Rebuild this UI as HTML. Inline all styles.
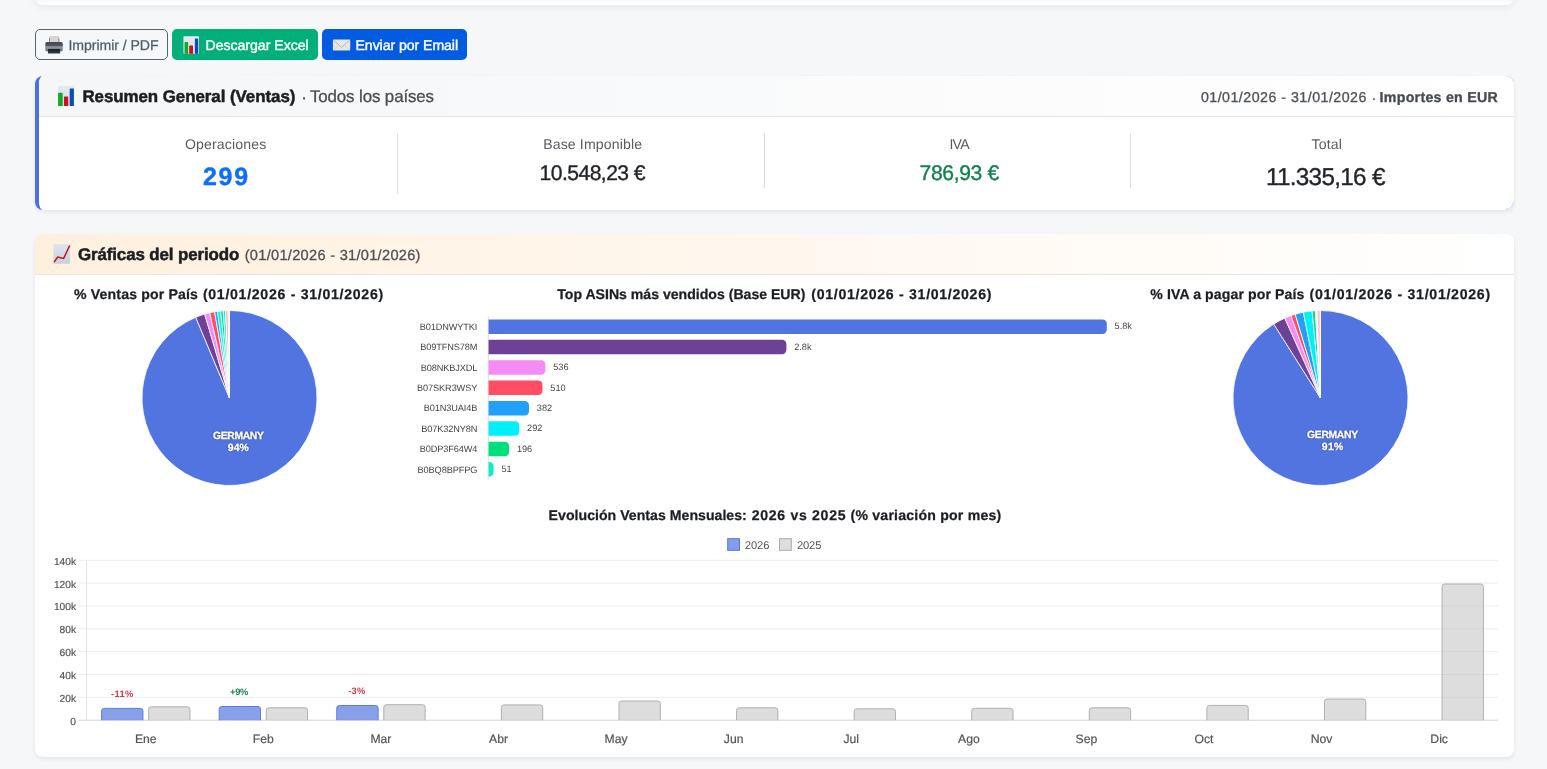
<!DOCTYPE html>
<html lang="es"><head><meta charset="utf-8"><title>Resumen General (Ventas)</title>
<style>
html,body{margin:0;padding:0;}
body{text-rendering:geometricPrecision;width:1547px;height:769px;overflow:hidden;background:#f5f7f9;font-family:"Liberation Sans",Arial,sans-serif;}
#page{will-change:transform;position:relative;width:1547px;height:769px;overflow:hidden;background:#f5f7f9;}
.t{position:absolute;white-space:pre;display:block;}
.abs{position:absolute;}
.card{position:absolute;background:#fff;border-radius:8px;box-shadow:0 2px 4px rgba(0,0,0,.08);}
.btn{position:absolute;border-radius:5px;box-sizing:border-box;}
.pl{text-shadow:0 0 2px rgba(0,0,0,.45),0 0 1px rgba(0,0,0,.4);}
svg{position:absolute;left:0;top:0;}
.grp{display:block;margin:0;padding:0;}

</style></head>
<body>
<div id="page">
<div class="card" style="left:35px;top:-40px;width:1479px;height:45px;background:linear-gradient(180deg,#f7f7f7 0,#f7f7f7 40px,#ffffff 44px);box-shadow:0 2px 8px rgba(0,0,0,.075);"></div>
<div class="btn" style="left:35px;top:29px;width:133px;height:31px;border:1px solid #59636c;background:transparent;"></div>
<div class="btn" style="left:172px;top:29px;width:146px;height:31px;background:#02af7a;"></div>
<div class="btn" style="left:322px;top:29px;width:145px;height:31px;background:#035be2;"></div>
<div class="card" style="left:35px;top:76px;width:1475px;height:134px;border-left:4px solid #4f6fdc;overflow:hidden;"><div class="abs" style="left:0;top:0;width:1475px;height:40px;background:linear-gradient(90deg,#f5f6f8 0%,#ffffff 100%);border-bottom:1px solid #e3e5e8;"></div><div class="abs" style="left:358px;top:57px;width:1px;height:61px;background:#dcdfe3;"></div><div class="abs" style="left:725px;top:57px;width:1px;height:55px;background:#dcdfe3;"></div><div class="abs" style="left:1091px;top:57px;width:1px;height:55px;background:#dcdfe3;"></div></div>
<div class="card" style="left:35px;top:234px;width:1479px;height:522.5px;overflow:hidden;"><div class="abs" style="left:0;top:0;width:1479px;height:40px;background:linear-gradient(90deg,#fff0de 0%,#ffffff 100%);border-bottom:1px solid #e9e6e1;"></div></div>
<svg width="1547" height="769" viewBox="0 0 1547 769"><defs><linearGradient id="pb" x1="0" y1="0" x2="0" y2="1"><stop offset="0" stop-color="#3d4955"/><stop offset="0.38" stop-color="#4b5762"/><stop offset="0.52" stop-color="#939ca2"/><stop offset="0.72" stop-color="#7d878d"/><stop offset="1" stop-color="#69737a"/></linearGradient><linearGradient id="pt" x1="0" y1="0" x2="0" y2="1"><stop offset="0" stop-color="#1b1e21"/><stop offset="1" stop-color="#36414a"/></linearGradient></defs>
<g><rect x="49.2" y="36.1" width="9.9" height="6.6" rx="0.8" fill="#d8d4ce"/><rect x="49.0" y="38.2" width="0.9" height="4.2" fill="#7a7c7e"/><rect x="58.4" y="38.2" width="0.9" height="4.2" fill="#7a7c7e"/><rect x="45.3" y="42.1" width="17.5" height="9.2" rx="1.6" fill="url(#pb)"/><rect x="47.9" y="49.1" width="12.3" height="4.5" rx="0.9" fill="url(#pt)"/></g>
<defs><linearGradient id="bg1" x1="0" y1="0" x2="0" y2="1"><stop offset="0" stop-color="#e4eaf0"/><stop offset="1" stop-color="#d3dbe3"/></linearGradient></defs><rect x="183.4" y="36.2" width="15.6" height="17.6" rx="0.8" fill="url(#bg1)"/><rect x="184.60" y="42.10" width="3.50" height="11.70" rx="0.6" fill="#0faa2a"/><rect x="189.20" y="45.40" width="3.80" height="8.40" rx="0.6" fill="#cf1019"/><rect x="194.90" y="38.40" width="3.30" height="15.40" rx="0.6" fill="#0a4db4"/>
<defs><linearGradient id="bg2" x1="0" y1="0" x2="0" y2="1"><stop offset="0" stop-color="#e4eaf0"/><stop offset="1" stop-color="#d3dbe3"/></linearGradient></defs><rect x="57.9" y="86.1" width="16.1" height="20.0" rx="0.8" fill="url(#bg2)"/><rect x="58.10" y="92.80" width="4.60" height="13.30" rx="0.6" fill="#0faa2a"/><rect x="64.00" y="96.50" width="4.20" height="9.60" rx="0.6" fill="#cf1019"/><rect x="69.70" y="88.40" width="4.20" height="17.70" rx="0.6" fill="#0a4db4"/>
<g><rect x="332.9" y="39.6" width="17.3" height="10.9" rx="0.9" fill="#e7e6e4"/><path d="M333.6 40.3 L341.5 47.4 L349.5 40.3" fill="none" stroke="#b4b4b4" stroke-width="0.9" stroke-linejoin="round"/><path d="M333.5 50 L339 45.2 M349.6 50 L344 45.2" fill="none" stroke="#d2d1cf" stroke-width="0.7"/></g>
<defs><linearGradient id="cu" x1="0" y1="0" x2="0" y2="1"><stop offset="0" stop-color="#dde6ee"/><stop offset="1" stop-color="#c6d0d9"/></linearGradient></defs>
<g><rect x="53.4" y="244.1" width="16.7" height="19.6" rx="0.8" fill="url(#cu)"/><path d="M54.4 261.7 L57.7 257.0 L63.6 258.6 L69.4 246.2" fill="none" stroke="#d8f4f8" stroke-width="2.8" stroke-linejoin="round" stroke-linecap="round" opacity="0.8"/><path d="M54.4 261.7 L57.7 257.0 L63.6 258.6 L69.4 246.2" fill="none" stroke="#c9151b" stroke-width="1.6" stroke-linejoin="round" stroke-linecap="round"/></g>
<path d="M1505.5 209.4 A8 8 0 0 0 1513.5 201.8" fill="none" stroke="#bcc8f4" stroke-width="0.9"/>
<path d="M1507.2 76.4 A8 8 0 0 1 1513.7 82.0" fill="none" stroke="#d3dbf8" stroke-width="0.9"/>
<path d="M229.5 398.0 L229.50 310.50 A87.5 87.5 0 1 1 195.73 317.28 Z" fill="#5274e0" stroke="#fff" stroke-width="0.8" stroke-linejoin="bevel"/><path d="M229.5 398.0 L195.73 317.28 A87.5 87.5 0 0 1 204.65 314.10 Z" fill="#6d4296" stroke="#fff" stroke-width="0.8" stroke-linejoin="bevel"/><path d="M229.5 398.0 L204.65 314.10 A87.5 87.5 0 0 1 209.67 312.78 Z" fill="#f58cf5" stroke="#fff" stroke-width="0.8" stroke-linejoin="bevel"/><path d="M229.5 398.0 L209.67 312.78 A87.5 87.5 0 0 1 214.61 311.78 Z" fill="#ff4d63" stroke="#fff" stroke-width="0.8" stroke-linejoin="bevel"/><path d="M229.5 398.0 L214.61 311.78 A87.5 87.5 0 0 1 217.47 311.33 Z" fill="#20a0f8" stroke="#fff" stroke-width="0.8" stroke-linejoin="bevel"/><path d="M229.5 398.0 L217.47 311.33 A87.5 87.5 0 0 1 220.60 310.95 Z" fill="#00f0fa" stroke="#fff" stroke-width="0.8" stroke-linejoin="bevel"/><path d="M229.5 398.0 L220.60 310.95 A87.5 87.5 0 0 1 223.24 310.72 Z" fill="#00e07a" stroke="#fff" stroke-width="0.8" stroke-linejoin="bevel"/><path d="M229.5 398.0 L223.24 310.72 A87.5 87.5 0 0 1 225.53 310.59 Z" fill="#12ecc6" stroke="#fff" stroke-width="0.8" stroke-linejoin="bevel"/><path d="M229.5 398.0 L225.53 310.59 A87.5 87.5 0 0 1 228.28 310.51 Z" fill="#ffb6d2" stroke="#fff" stroke-width="0.8" stroke-linejoin="bevel"/><path d="M229.5 398.0 L228.28 310.51 A87.5 87.5 0 0 1 229.50 310.50 Z" fill="#fde9a0" stroke="#fff" stroke-width="0.8" stroke-linejoin="bevel"/>
<path d="M1320.5 398.0 L1320.50 310.50 A87.5 87.5 0 1 1 1273.74 324.04 Z" fill="#5274e0" stroke="#fff" stroke-width="0.8" stroke-linejoin="bevel"/><path d="M1320.5 398.0 L1273.74 324.04 A87.5 87.5 0 0 1 1284.77 318.13 Z" fill="#6d4296" stroke="#fff" stroke-width="0.8" stroke-linejoin="bevel"/><path d="M1320.5 398.0 L1284.77 318.13 A87.5 87.5 0 0 1 1291.00 315.62 Z" fill="#f58cf5" stroke="#fff" stroke-width="0.8" stroke-linejoin="bevel"/><path d="M1320.5 398.0 L1291.00 315.62 A87.5 87.5 0 0 1 1295.21 314.23 Z" fill="#ff4d63" stroke="#fff" stroke-width="0.8" stroke-linejoin="bevel"/><path d="M1320.5 398.0 L1295.21 314.23 A87.5 87.5 0 0 1 1303.35 312.20 Z" fill="#20a0f8" stroke="#fff" stroke-width="0.8" stroke-linejoin="bevel"/><path d="M1320.5 398.0 L1303.35 312.20 A87.5 87.5 0 0 1 1312.11 310.90 Z" fill="#00f0fa" stroke="#fff" stroke-width="0.8" stroke-linejoin="bevel"/><path d="M1320.5 398.0 L1312.11 310.90 A87.5 87.5 0 0 1 1315.39 310.65 Z" fill="#00e07a" stroke="#fff" stroke-width="0.8" stroke-linejoin="bevel"/><path d="M1320.5 398.0 L1315.39 310.65 A87.5 87.5 0 0 1 1316.99 310.57 Z" fill="#eafcf8" stroke="#fff" stroke-width="0.8" stroke-linejoin="bevel"/><path d="M1320.5 398.0 L1316.99 310.57 A87.5 87.5 0 0 1 1320.32 310.50 Z" fill="#ffbcdc" stroke="#fff" stroke-width="0.8" stroke-linejoin="bevel"/><path d="M1320.5 398.0 L1320.32 310.50 A87.5 87.5 0 0 1 1320.50 310.50 Z" fill="#fde9a0" stroke="#fff" stroke-width="0.8" stroke-linejoin="bevel"/>
<line x1="488.3" y1="316.5" x2="488.3" y2="479.5" stroke="#dcdcdc" stroke-width="1"/>
<path d="M488.6 319.44 L1102.60 319.44 A4.20 4.20 0 0 1 1106.80 323.64 L1106.80 329.74 A4.20 4.20 0 0 1 1102.60 333.94 L488.6 333.94 Z" fill="#5274e0"/>
<path d="M488.6 339.81 L782.20 339.81 A4.20 4.20 0 0 1 786.40 344.01 L786.40 350.11 A4.20 4.20 0 0 1 782.20 354.31 L488.6 354.31 Z" fill="#6d4296"/>
<path d="M488.6 360.19 L541.20 360.19 A4.20 4.20 0 0 1 545.40 364.39 L545.40 370.49 A4.20 4.20 0 0 1 541.20 374.69 L488.6 374.69 Z" fill="#f58cf5"/>
<path d="M488.6 380.56 L538.30 380.56 A4.20 4.20 0 0 1 542.50 384.76 L542.50 390.86 A4.20 4.20 0 0 1 538.30 395.06 L488.6 395.06 Z" fill="#ff4d63"/>
<path d="M488.6 400.94 L524.80 400.94 A4.20 4.20 0 0 1 529.00 405.14 L529.00 411.24 A4.20 4.20 0 0 1 524.80 415.44 L488.6 415.44 Z" fill="#20a0f8"/>
<path d="M488.6 421.31 L515.10 421.31 A4.20 4.20 0 0 1 519.30 425.51 L519.30 431.61 A4.20 4.20 0 0 1 515.10 435.81 L488.6 435.81 Z" fill="#00f0fa"/>
<path d="M488.6 441.69 L504.90 441.69 A4.20 4.20 0 0 1 509.10 445.89 L509.10 451.99 A4.20 4.20 0 0 1 504.90 456.19 L488.6 456.19 Z" fill="#00e07a"/>
<path d="M488.6 462.06 L489.40 462.06 A4.20 4.20 0 0 1 493.60 466.26 L493.60 472.36 A4.20 4.20 0 0 1 489.40 476.56 L488.6 476.56 Z" fill="#12ecc6"/>
<line x1="78.5" y1="697.35" x2="1498.0" y2="697.35" stroke="#ececec" stroke-width="1"/>
<line x1="78.5" y1="674.50" x2="1498.0" y2="674.50" stroke="#ececec" stroke-width="1"/>
<line x1="78.5" y1="651.65" x2="1498.0" y2="651.65" stroke="#ececec" stroke-width="1"/>
<line x1="78.5" y1="628.80" x2="1498.0" y2="628.80" stroke="#ececec" stroke-width="1"/>
<line x1="78.5" y1="605.95" x2="1498.0" y2="605.95" stroke="#ececec" stroke-width="1"/>
<line x1="78.5" y1="583.10" x2="1498.0" y2="583.10" stroke="#ececec" stroke-width="1"/>
<line x1="78.5" y1="560.25" x2="1498.0" y2="560.25" stroke="#ececec" stroke-width="1"/>
<line x1="78.5" y1="720.2" x2="1498.0" y2="720.2" stroke="#d6d6d6" stroke-width="1"/>
<line x1="86.5" y1="560.3" x2="86.5" y2="720.2" stroke="#e2e2e2" stroke-width="1"/>
<path d="M101.61 720.2 L101.61 711.00 A2.6 2.6 0 0 1 104.21 708.40 L140.34 708.40 A2.6 2.6 0 0 1 142.94 711.00 L142.94 720.2" fill="#4e73df" fill-opacity="0.68" stroke="#5b7be2" stroke-width="1"/>
<path d="M148.64 720.2 L148.64 709.40 A2.6 2.6 0 0 1 151.24 706.80 L187.37 706.80 A2.6 2.6 0 0 1 189.97 709.40 L189.97 720.2" fill="#bcbcbc" fill-opacity="0.5" stroke="#b0b0b0" stroke-width="1"/>
<path d="M219.19 720.2 L219.19 709.10 A2.6 2.6 0 0 1 221.79 706.50 L257.92 706.50 A2.6 2.6 0 0 1 260.52 709.10 L260.52 720.2" fill="#4e73df" fill-opacity="0.68" stroke="#5b7be2" stroke-width="1"/>
<path d="M266.23 720.2 L266.23 710.40 A2.6 2.6 0 0 1 268.83 707.80 L304.96 707.80 A2.6 2.6 0 0 1 307.56 710.40 L307.56 720.2" fill="#bcbcbc" fill-opacity="0.5" stroke="#b0b0b0" stroke-width="1"/>
<path d="M336.78 720.2 L336.78 708.10 A2.6 2.6 0 0 1 339.38 705.50 L375.51 705.50 A2.6 2.6 0 0 1 378.11 708.10 L378.11 720.2" fill="#4e73df" fill-opacity="0.68" stroke="#5b7be2" stroke-width="1"/>
<path d="M383.81 720.2 L383.81 707.30 A2.6 2.6 0 0 1 386.41 704.70 L422.54 704.70 A2.6 2.6 0 0 1 425.14 707.30 L425.14 720.2" fill="#bcbcbc" fill-opacity="0.5" stroke="#b0b0b0" stroke-width="1"/>
<path d="M501.39 720.2 L501.39 707.50 A2.6 2.6 0 0 1 503.99 704.90 L540.12 704.90 A2.6 2.6 0 0 1 542.72 707.50 L542.72 720.2" fill="#bcbcbc" fill-opacity="0.5" stroke="#b0b0b0" stroke-width="1"/>
<path d="M618.98 720.2 L618.98 703.60 A2.6 2.6 0 0 1 621.58 701.00 L657.71 701.00 A2.6 2.6 0 0 1 660.31 703.60 L660.31 720.2" fill="#bcbcbc" fill-opacity="0.5" stroke="#b0b0b0" stroke-width="1"/>
<path d="M736.56 720.2 L736.56 710.40 A2.6 2.6 0 0 1 739.16 707.80 L775.29 707.80 A2.6 2.6 0 0 1 777.89 710.40 L777.89 720.2" fill="#bcbcbc" fill-opacity="0.5" stroke="#b0b0b0" stroke-width="1"/>
<path d="M854.14 720.2 L854.14 711.40 A2.6 2.6 0 0 1 856.74 708.80 L892.87 708.80 A2.6 2.6 0 0 1 895.47 711.40 L895.47 720.2" fill="#bcbcbc" fill-opacity="0.5" stroke="#b0b0b0" stroke-width="1"/>
<path d="M971.73 720.2 L971.73 710.90 A2.6 2.6 0 0 1 974.33 708.30 L1010.46 708.30 A2.6 2.6 0 0 1 1013.06 710.90 L1013.06 720.2" fill="#bcbcbc" fill-opacity="0.5" stroke="#b0b0b0" stroke-width="1"/>
<path d="M1089.31 720.2 L1089.31 710.40 A2.6 2.6 0 0 1 1091.91 707.80 L1128.04 707.80 A2.6 2.6 0 0 1 1130.64 710.40 L1130.64 720.2" fill="#bcbcbc" fill-opacity="0.5" stroke="#b0b0b0" stroke-width="1"/>
<path d="M1206.89 720.2 L1206.89 708.00 A2.6 2.6 0 0 1 1209.49 705.40 L1245.62 705.40 A2.6 2.6 0 0 1 1248.22 708.00 L1248.22 720.2" fill="#bcbcbc" fill-opacity="0.5" stroke="#b0b0b0" stroke-width="1"/>
<path d="M1324.48 720.2 L1324.48 701.60 A2.6 2.6 0 0 1 1327.08 699.00 L1363.21 699.00 A2.6 2.6 0 0 1 1365.81 701.60 L1365.81 720.2" fill="#bcbcbc" fill-opacity="0.5" stroke="#b0b0b0" stroke-width="1"/>
<path d="M1442.06 720.2 L1442.06 586.60 A2.6 2.6 0 0 1 1444.66 584.00 L1480.79 584.00 A2.6 2.6 0 0 1 1483.39 586.60 L1483.39 720.2" fill="#bcbcbc" fill-opacity="0.5" stroke="#b0b0b0" stroke-width="1"/>
<rect x="727.7" y="538.7" width="11.8" height="11.6" fill="#859cea" stroke="#5577e1" stroke-width="1"/>
<rect x="779.5" y="538.7" width="11.8" height="11.6" fill="#dedede" stroke="#ababab" stroke-width="1"/></svg>
<nav class="grp" aria-label="Acciones">
<span class="t" style="left:68.40px;top:35.80px;font-size:14.1px;line-height:18px;font-weight:400;color:#525c66;letter-spacing:-0.048px;-webkit-text-stroke:0.25px #525c66;">Imprimir / PDF</span>
<span class="t" style="left:205.50px;top:35.80px;font-size:14.1px;line-height:18px;font-weight:400;color:#ffffff;letter-spacing:-0.015px;-webkit-text-stroke:0.4px #ffffff;">Descargar Excel</span>
<span class="t" style="left:355.50px;top:35.80px;font-size:14.1px;line-height:18px;font-weight:400;color:#ffffff;letter-spacing:-0.054px;-webkit-text-stroke:0.4px #ffffff;">Enviar por Email</span>
</nav>
<section class="grp" aria-label="Resumen General">
<span class="t" style="left:82.40px;top:85.80px;font-size:16.9px;line-height:22px;font-weight:700;color:#1b1e22;letter-spacing:-0.045px;-webkit-text-stroke:0.5px #1b1e22;">Resumen General (Ventas)</span>
<span class="t" style="left:301.30px;top:86.90px;font-size:16.9px;line-height:22px;font-weight:400;color:#4a4e53;letter-spacing:-2.125px;-webkit-text-stroke:0.3px #4a4e53;">·</span>
<span class="t" style="left:309.90px;top:85.80px;font-size:16.9px;line-height:22px;font-weight:400;color:#4a4e53;letter-spacing:-0.109px;-webkit-text-stroke:0.3px #4a4e53;">Todos los países</span>
<span class="t" style="left:1200.90px;top:88.80px;font-size:14.2px;line-height:18px;font-weight:400;color:#4d5257;letter-spacing:0.494px;-webkit-text-stroke:0.3px #4d5257;">01/01/2026 - 31/01/2026</span>
<span class="t" style="left:1371.60px;top:89.80px;font-size:14.2px;line-height:18px;font-weight:400;color:#4d5257;letter-spacing:-1.534px;-webkit-text-stroke:0.3px #4d5257;">·</span>
<span class="t" style="left:1379.60px;top:88.80px;font-size:14.2px;line-height:18px;font-weight:700;color:#464a4f;letter-spacing:0.278px;-webkit-text-stroke:0.3px #464a4f;">Importes en EUR</span>
<span class="t" style="left:185.00px;top:134.70px;font-size:14.1px;line-height:18px;font-weight:400;color:#575b60;letter-spacing:0.128px;">Operaciones</span>
<span class="t" style="left:543.20px;top:134.70px;font-size:14.1px;line-height:18px;font-weight:400;color:#575b60;letter-spacing:0.126px;">Base Imponible</span>
<span class="t" style="left:949.40px;top:134.70px;font-size:14.1px;line-height:18px;font-weight:400;color:#575b60;letter-spacing:-0.686px;">IVA</span>
<span class="t" style="left:1311.40px;top:134.70px;font-size:14.1px;line-height:18px;font-weight:400;color:#575b60;letter-spacing:0.205px;">Total</span>
<span class="t" style="left:202.90px;top:160.60px;font-size:25.0px;line-height:32px;font-weight:700;color:#0d6efd;letter-spacing:1.741px;-webkit-text-stroke:0.4px #0d6efd;">299</span>
<span class="t" style="left:539.60px;top:160.00px;font-size:21.1px;line-height:27px;font-weight:400;color:#212529;letter-spacing:-0.544px;-webkit-text-stroke:0.35px #212529;">10.548,23 €</span>
<span class="t" style="left:919.50px;top:160.00px;font-size:21.1px;line-height:27px;font-weight:400;color:#0f7f4d;letter-spacing:-0.344px;-webkit-text-stroke:0.35px #0f7f4d;">786,93 €</span>
<span class="t" style="left:1266.00px;top:161.60px;font-size:24.3px;line-height:32px;font-weight:400;color:#212529;letter-spacing:-0.716px;-webkit-text-stroke:0.35px #212529;">11.335,16 €</span>
</section>
<section class="grp" aria-label="Gráficas del periodo">
<span class="t" style="left:78.00px;top:243.70px;font-size:16.9px;line-height:22px;font-weight:700;color:#1b1e22;letter-spacing:-0.112px;-webkit-text-stroke:0.5px #1b1e22;">Gráficas del periodo</span>
<span class="t" style="left:244.70px;top:246.70px;font-size:14.6px;line-height:19px;font-weight:400;color:#4d5257;letter-spacing:0.292px;-webkit-text-stroke:0.3px #4d5257;">(01/01/2026 - 31/01/2026)</span>
<span class="t" style="left:74.00px;top:284.70px;font-size:14.1px;line-height:18px;font-weight:700;color:#1b1e22;letter-spacing:0.155px;-webkit-text-stroke:0.25px #1b1e22;">% Ventas por País</span>
<span class="t" style="left:202.90px;top:284.70px;font-size:14.1px;line-height:18px;font-weight:700;color:#1b1e22;letter-spacing:0.721px;-webkit-text-stroke:0.25px #1b1e22;">(01/01/2026 - 31/01/2026)</span>
<span class="t" style="left:557.30px;top:284.70px;font-size:14.1px;line-height:18px;font-weight:700;color:#1b1e22;letter-spacing:-0.005px;-webkit-text-stroke:0.25px #1b1e22;">Top ASINs más vendidos (Base EUR)</span>
<span class="t" style="left:811.30px;top:284.70px;font-size:14.1px;line-height:18px;font-weight:700;color:#1b1e22;letter-spacing:0.713px;-webkit-text-stroke:0.25px #1b1e22;">(01/01/2026 - 31/01/2026)</span>
<span class="t" style="left:1150.30px;top:284.70px;font-size:14.1px;line-height:18px;font-weight:700;color:#1b1e22;letter-spacing:0.097px;-webkit-text-stroke:0.25px #1b1e22;">% IVA a pagar por País</span>
<span class="t" style="left:1309.50px;top:284.70px;font-size:14.1px;line-height:18px;font-weight:700;color:#1b1e22;letter-spacing:0.733px;-webkit-text-stroke:0.25px #1b1e22;">(01/01/2026 - 31/01/2026)</span>
<span class="t" style="left:548.60px;top:505.75px;font-size:14.1px;line-height:18px;font-weight:700;color:#1b1e22;letter-spacing:0.032px;-webkit-text-stroke:0.25px #1b1e22;">Evolución Ventas Mensuales:</span>
<span class="t" style="left:751.80px;top:505.75px;font-size:14.1px;line-height:18px;font-weight:700;color:#1b1e22;letter-spacing:0.680px;-webkit-text-stroke:0.25px #1b1e22;">2026 vs 2025</span>
<span class="t" style="left:850.50px;top:505.75px;font-size:14.1px;line-height:18px;font-weight:700;color:#1b1e22;letter-spacing:0.212px;-webkit-text-stroke:0.25px #1b1e22;">(% variación por mes)</span>
<span class="t pl" style="left:213.00px;top:429.68px;font-size:10.4px;line-height:14px;font-weight:700;color:#ffffff;letter-spacing:-0.371px;-webkit-text-stroke:0.3px #fff;">GERMANY</span>
<span class="t pl" style="left:227.80px;top:441.88px;font-size:10.4px;line-height:14px;font-weight:700;color:#ffffff;letter-spacing:0.102px;-webkit-text-stroke:0.3px #fff;">94%</span>
<span class="t pl" style="left:1307.10px;top:429.08px;font-size:10.4px;line-height:14px;font-weight:700;color:#ffffff;letter-spacing:-0.354px;-webkit-text-stroke:0.3px #fff;">GERMANY</span>
<span class="t pl" style="left:1321.80px;top:441.08px;font-size:10.4px;line-height:14px;font-weight:700;color:#ffffff;letter-spacing:0.302px;-webkit-text-stroke:0.3px #fff;">91%</span>
<span class="t" style="left:419.68px;top:320.95px;font-size:9.2px;line-height:12px;font-weight:400;color:#444444;letter-spacing:-0.120px;">B01DNWYTKI</span>
<span class="t" style="left:420.18px;top:341.33px;font-size:9.2px;line-height:12px;font-weight:400;color:#444444;letter-spacing:-0.120px;">B09TFNS78M</span>
<span class="t" style="left:420.68px;top:361.70px;font-size:9.2px;line-height:12px;font-weight:400;color:#444444;letter-spacing:-0.120px;">B08NKBJXDL</span>
<span class="t" style="left:417.12px;top:382.08px;font-size:9.2px;line-height:12px;font-weight:400;color:#444444;letter-spacing:-0.120px;">B07SKR3WSY</span>
<span class="t" style="left:423.75px;top:402.45px;font-size:9.2px;line-height:12px;font-weight:400;color:#444444;letter-spacing:-0.120px;">B01N3UAI4B</span>
<span class="t" style="left:421.18px;top:422.83px;font-size:9.2px;line-height:12px;font-weight:400;color:#444444;letter-spacing:-0.120px;">B07K32NY8N</span>
<span class="t" style="left:419.67px;top:443.20px;font-size:9.2px;line-height:12px;font-weight:400;color:#444444;letter-spacing:-0.120px;">B0DP3F64W4</span>
<span class="t" style="left:417.62px;top:463.58px;font-size:9.2px;line-height:12px;font-weight:400;color:#444444;letter-spacing:-0.120px;">B0BQ8BPFPG</span>
<span class="t" style="left:1114.60px;top:320.45px;font-size:9.2px;line-height:12px;font-weight:400;color:#444444;letter-spacing:0.000px;">5.8k</span>
<span class="t" style="left:794.20px;top:340.83px;font-size:9.2px;line-height:12px;font-weight:400;color:#444444;letter-spacing:0.000px;">2.8k</span>
<span class="t" style="left:553.20px;top:361.20px;font-size:9.2px;line-height:12px;font-weight:400;color:#444444;letter-spacing:0.000px;">536</span>
<span class="t" style="left:550.30px;top:381.58px;font-size:9.2px;line-height:12px;font-weight:400;color:#444444;letter-spacing:0.000px;">510</span>
<span class="t" style="left:536.80px;top:401.95px;font-size:9.2px;line-height:12px;font-weight:400;color:#444444;letter-spacing:0.000px;">382</span>
<span class="t" style="left:527.10px;top:422.33px;font-size:9.2px;line-height:12px;font-weight:400;color:#444444;letter-spacing:0.000px;">292</span>
<span class="t" style="left:516.90px;top:442.70px;font-size:9.2px;line-height:12px;font-weight:400;color:#444444;letter-spacing:0.000px;">196</span>
<span class="t" style="left:501.40px;top:463.08px;font-size:9.2px;line-height:12px;font-weight:400;color:#444444;letter-spacing:0.000px;">51</span>
<span class="t" style="left:70.33px;top:715.71px;font-size:10.2px;line-height:13px;font-weight:400;color:#545454;letter-spacing:0.000px;-webkit-text-stroke:0.2px #545454;">0</span>
<span class="t" style="left:59.56px;top:692.86px;font-size:10.2px;line-height:13px;font-weight:400;color:#545454;letter-spacing:0.000px;-webkit-text-stroke:0.2px #545454;">20k</span>
<span class="t" style="left:59.56px;top:670.01px;font-size:10.2px;line-height:13px;font-weight:400;color:#545454;letter-spacing:0.000px;-webkit-text-stroke:0.2px #545454;">40k</span>
<span class="t" style="left:59.56px;top:647.16px;font-size:10.2px;line-height:13px;font-weight:400;color:#545454;letter-spacing:0.000px;-webkit-text-stroke:0.2px #545454;">60k</span>
<span class="t" style="left:59.56px;top:624.31px;font-size:10.2px;line-height:13px;font-weight:400;color:#545454;letter-spacing:0.000px;-webkit-text-stroke:0.2px #545454;">80k</span>
<span class="t" style="left:53.91px;top:601.46px;font-size:10.2px;line-height:13px;font-weight:400;color:#545454;letter-spacing:0.000px;-webkit-text-stroke:0.2px #545454;">100k</span>
<span class="t" style="left:53.91px;top:578.61px;font-size:10.2px;line-height:13px;font-weight:400;color:#545454;letter-spacing:0.000px;-webkit-text-stroke:0.2px #545454;">120k</span>
<span class="t" style="left:53.91px;top:555.76px;font-size:10.2px;line-height:13px;font-weight:400;color:#545454;letter-spacing:0.000px;-webkit-text-stroke:0.2px #545454;">140k</span>
<span class="t" style="left:134.95px;top:730.80px;font-size:12.2px;line-height:16px;font-weight:400;color:#545454;letter-spacing:0.000px;-webkit-text-stroke:0.2px #545454;">Ene</span>
<span class="t" style="left:252.86px;top:730.80px;font-size:12.2px;line-height:16px;font-weight:400;color:#545454;letter-spacing:0.000px;-webkit-text-stroke:0.2px #545454;">Feb</span>
<span class="t" style="left:370.45px;top:730.80px;font-size:12.2px;line-height:16px;font-weight:400;color:#545454;letter-spacing:0.000px;-webkit-text-stroke:0.2px #545454;">Mar</span>
<span class="t" style="left:489.05px;top:730.80px;font-size:12.2px;line-height:16px;font-weight:400;color:#545454;letter-spacing:0.000px;-webkit-text-stroke:0.2px #545454;">Abr</span>
<span class="t" style="left:604.59px;top:730.80px;font-size:12.2px;line-height:16px;font-weight:400;color:#545454;letter-spacing:0.000px;-webkit-text-stroke:0.2px #545454;">May</span>
<span class="t" style="left:723.86px;top:730.80px;font-size:12.2px;line-height:16px;font-weight:400;color:#545454;letter-spacing:0.000px;-webkit-text-stroke:0.2px #545454;">Jun</span>
<span class="t" style="left:843.47px;top:730.80px;font-size:12.2px;line-height:16px;font-weight:400;color:#545454;letter-spacing:0.000px;-webkit-text-stroke:0.2px #545454;">Jul</span>
<span class="t" style="left:958.01px;top:730.80px;font-size:12.2px;line-height:16px;font-weight:400;color:#545454;letter-spacing:0.000px;-webkit-text-stroke:0.2px #545454;">Ago</span>
<span class="t" style="left:1075.59px;top:730.80px;font-size:12.2px;line-height:16px;font-weight:400;color:#545454;letter-spacing:0.000px;-webkit-text-stroke:0.2px #545454;">Sep</span>
<span class="t" style="left:1194.53px;top:730.80px;font-size:12.2px;line-height:16px;font-weight:400;color:#545454;letter-spacing:0.000px;-webkit-text-stroke:0.2px #545454;">Oct</span>
<span class="t" style="left:1310.75px;top:730.80px;font-size:12.2px;line-height:16px;font-weight:400;color:#545454;letter-spacing:0.000px;-webkit-text-stroke:0.2px #545454;">Nov</span>
<span class="t" style="left:1430.37px;top:730.80px;font-size:12.2px;line-height:16px;font-weight:400;color:#545454;letter-spacing:0.000px;-webkit-text-stroke:0.2px #545454;">Dic</span>
<span class="t" style="left:744.80px;top:538.85px;font-size:11.2px;line-height:15px;font-weight:400;color:#545454;letter-spacing:-0.064px;">2026</span>
<span class="t" style="left:797.00px;top:538.85px;font-size:11.2px;line-height:15px;font-weight:400;color:#545454;letter-spacing:-0.164px;">2025</span>
<span class="t" style="left:111.10px;top:688.20px;font-size:9.3px;line-height:12px;font-weight:700;color:#dc3545;letter-spacing:0.332px;">-11%</span>
<span class="t" style="left:230.00px;top:686.20px;font-size:9.3px;line-height:12px;font-weight:700;color:#198754;letter-spacing:-0.288px;">+9%</span>
<span class="t" style="left:348.20px;top:684.90px;font-size:9.3px;line-height:12px;font-weight:700;color:#dc3545;letter-spacing:0.227px;">-3%</span>
</section>
</div>
</body></html>
